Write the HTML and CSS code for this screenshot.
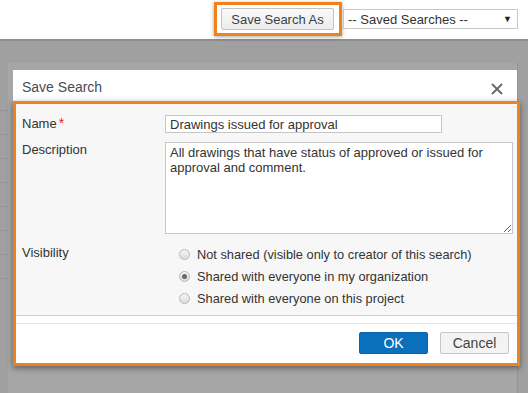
FILE: index.html
```html
<!DOCTYPE html>
<html lang="en">
<head>
    <meta charset="UTF-8">
    <meta name="viewport" content="width=device-width, initial-scale=1.0">
    <title>Save Search</title>
    <link rel="stylesheet" href="styles.css">
</head>
<body>
    <div class="toolbar">
        <div class="callout">
            <button type="button" class="btn-plain">Save Search As</button>
        </div>
        <div class="saved-select">
            <span>-- Saved Searches --</span>
            <span class="caret">&#9660;</span>
        </div>
    </div>

    <div class="backdrop">
        <div class="rows">
            <i></i><i></i><i></i><i></i><i></i><i></i><i></i><i></i>
        </div>
        <div class="panel"></div>

        <div class="dialog">
            <div class="dialog-head">
                <span class="dialog-title">Save Search</span>
                <svg class="close" width="12" height="12" viewBox="0 0 12 12">
                    <path d="M1 1L11 11M11 1L1 11" stroke="#666" stroke-width="1.8" fill="none"/>
                </svg>
            </div>

            <div class="marked">
                <form class="dialog-body">
                    <div class="form-row">
                        <label class="field-label" for="searchName">Name<span class="req">*</span></label>
                        <input type="text" id="searchName" class="name-input" value="Drawings issued for approval">
                    </div>
                    <div class="form-row">
                        <label class="field-label" for="searchDesc">Description</label>
                        <textarea id="searchDesc" class="desc-input">All drawings that have status of approved or issued for approval and comment.</textarea>
                    </div>
                    <div class="form-row visibility">
                        <span class="field-label">Visibility</span>
                        <div class="choices">
                            <label class="choice"><input type="radio" name="vis"> Not shared (visible only to creator of this search)</label>
                            <label class="choice"><input type="radio" name="vis" checked> Shared with everyone in my organization</label>
                            <label class="choice"><input type="radio" name="vis"> Shared with everyone on this project</label>
                        </div>
                    </div>
                </form>
                <div class="dialog-foot">
                    <button type="button" class="btn-ok">OK</button>
                    <button type="button" class="btn-cancel">Cancel</button>
                </div>
            </div>
        </div>
    </div>
</body>
</html>
```

FILE: styles.css
```css
* {
    margin: 0;
    padding: 0;
    box-sizing: border-box;
}

body {
    font-family: "Liberation Sans", Arial, sans-serif;
    font-size: 13px;
    color: #333;
    width: 528px;
    height: 393px;
    overflow: hidden;
    background: #a0a0a0;
}

.toolbar {
    height: 41px;
    background: #fff;
    border-bottom: 2px solid #8e8e8e;
    display: flex;
    justify-content: flex-end;
    align-items: flex-start;
    padding: 2px 10px 0 0;
}

.callout {
    border: 3px solid #f0821e;
    padding: 3px 5px 3px 4px;
    box-shadow: 0 1px 4px rgba(0, 0, 0, 0.35);
    height: 34px;
    margin-right: 1px;
}

.btn-plain {
    font-family: inherit;
    font-size: 13px;
    color: #3b3f4a;
    width: 113px;
    height: 22px;
    background: linear-gradient(#f9f9f9, #ececec);
    border: 1px solid #c3c3c3;
    border-radius: 2px;
}

.saved-select {
    margin-top: 7px;
    width: 175px;
    height: 20px;
    border: 1px solid #c8c8c8;
    background: #fff;
    display: flex;
    justify-content: space-between;
    align-items: center;
    padding: 0 5px 0 4px;
    color: #333;
}

.caret {
    font-size: 9px;
    color: #222;
}

.backdrop {
    position: relative;
    height: 352px;
    padding: 29px 0 0 13px;
}

.rows {
    position: absolute;
    left: 0;
    top: 46px;
    width: 12px;
}

.rows i {
    display: block;
    height: 24px;
    border-bottom: 1px solid #959595;
}

.panel {
    position: absolute;
    left: 8px;
    top: 22px;
    width: 510px;
    height: 340px;
    background: #a6a6a6;
    border-right: 1px solid #949494;
}

.dialog {
    position: relative;
    width: 504px;
}

.dialog-head {
    height: 31px;
    background: #fff;
    display: flex;
    justify-content: space-between;
    align-items: center;
    padding: 2px 14px 0 9px;
}

.dialog-title {
    font-size: 14px;
    color: #474b55;
}

.close {
    margin-top: 4px;
}

.marked {
    width: 507px;
    border: 3px solid #f0821e;
    box-shadow: 0 2px 6px rgba(0, 0, 0, 0.45);
    background: #fff;
}

.dialog-body {
    background: #f7f7f7;
    border-bottom: 1px solid #cfcfcf;
    padding: 11px 0 6px 6px;
}

.form-row {
    display: flex;
    margin-bottom: 9px;
}

.field-label {
    width: 143px;
    flex-shrink: 0;
    line-height: 16px;
    color: #333;
}

.req {
    color: #e0242a;
    margin-left: 2px;
    font-size: 14px;
}

.name-input {
    width: 277px;
    height: 18px;
    border: 1px solid #c6c6c6;
    background: #fff;
    font-family: inherit;
    font-size: 13px;
    color: #333;
    padding: 0 4px;
}

.desc-input {
    width: 348px;
    height: 92px;
    border: 1px solid #c6c6c6;
    background: #fff;
    font-family: inherit;
    font-size: 13px;
    line-height: 15px;
    color: #333;
    padding: 2px 4px;
}

.visibility {
    margin-top: 12px;
    margin-bottom: 0;
}

.visibility .field-label {
    line-height: 13px;
}

.choices {
    display: flex;
    flex-direction: column;
    padding-left: 14px;
    margin-top: -3px;
    font-size: 12.8px;
}

.choice {
    display: flex;
    align-items: center;
    height: 22px;
    color: #333;
}

.choice input {
    appearance: none;
    width: 11px;
    height: 11px;
    border: 1px solid #b8b8b8;
    border-radius: 50%;
    background: linear-gradient(#f4f4f4, #dcdcdc);
    margin-right: 7px;
    position: relative;
}

.choice input:checked::before {
    content: "";
    position: absolute;
    left: 2px;
    top: 2px;
    width: 5px;
    height: 5px;
    border-radius: 50%;
    background: #6a6a6a;
}

.dialog-foot {
    margin-top: 7px;
    border-top: 1px solid #e6e6e6;
    height: 40px;
    display: flex;
    justify-content: flex-end;
    align-items: center;
    gap: 12px;
    padding: 0 8px 2px 0;
}

.btn-ok,
.btn-cancel {
    font-family: inherit;
    font-size: 14px;
    width: 69px;
    height: 22px;
    border-radius: 2px;
}

.btn-ok {
    background: #0a70bd;
    border: 1px solid #0a65ad;
    color: #fff;
}

.btn-cancel {
    background: #f3f3f3;
    border: 1px solid #c6c6c6;
    color: #444;
}
```
